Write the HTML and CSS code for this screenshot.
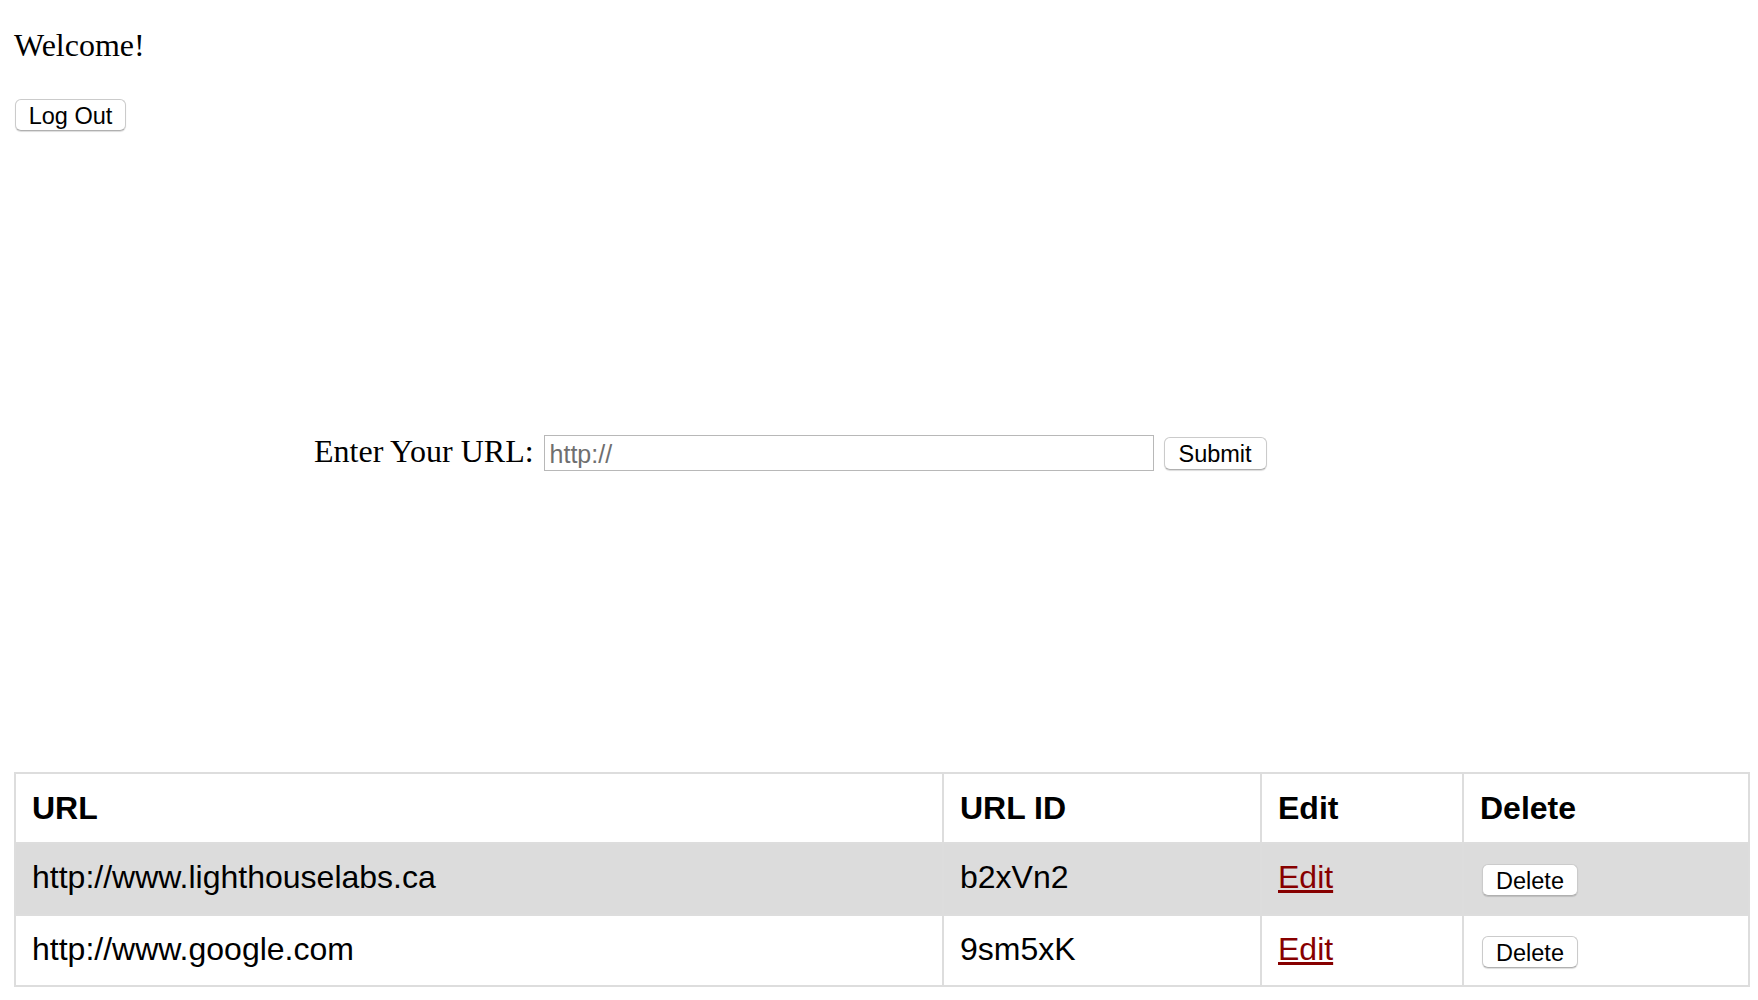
FILE: index.html
```html
<!DOCTYPE html>
<html lang="en">
<head>
<meta charset="utf-8">
<title>URL Shortener</title>
<link rel="stylesheet" href="styles.css">
</head>
<body>
<div class="page">
  <p class="welcome">Welcome!</p>
  <form class="logout-form">
    <button type="button" class="btn">Log Out</button>
  </form>
  <form class="url-form">
    <label class="url-label" for="longURL">Enter Your URL:</label>
    <input class="url-input" id="longURL" type="text" placeholder="http://">
    <button type="button" class="btn">Submit</button>
  </form>
  <table class="urls">
    <colgroup>
      <col class="c-url">
      <col class="c-id">
      <col class="c-edit">
      <col class="c-del">
    </colgroup>
    <thead>
      <tr class="head-row">
        <th>URL</th>
        <th>URL ID</th>
        <th>Edit</th>
        <th>Delete</th>
      </tr>
    </thead>
    <tbody>
      <tr class="row row-alt">
        <td>http://www.lighthouselabs.ca</td>
        <td>b2xVn2</td>
        <td><a href="#" class="edit-link">Edit</a></td>
        <td><button type="button" class="btn btn-del">Delete</button></td>
      </tr>
      <tr class="row row-last">
        <td>http://www.google.com</td>
        <td>9sm5xK</td>
        <td><a href="#" class="edit-link">Edit</a></td>
        <td><button type="button" class="btn btn-del">Delete</button></td>
      </tr>
    </tbody>
  </table>
</div>
</body>
</html>
```

FILE: styles.css
```css
html, body {
  margin: 0;
  padding: 0;
  background: #fff;
  color: #000;
}

.page {
  padding: 0 8px 0 14px;
  font-family: "Liberation Serif", "Times New Roman", serif;
  font-size: 32px;
}

.welcome {
  margin: 0;
  padding-top: 28px;
  line-height: 35px;
}

.logout-form {
  margin: 36px 0 0 0;
  display: flex;
}

.btn {
  font-family: "Liberation Sans", Arial, Helvetica, sans-serif;
  font-size: 23.5px;
  color: #000;
  background: #fff;
  height: 32px;
  padding: 2px 8px 0;
  border: 1px solid #cbcbcb;
  border-bottom-color: #b0b0b0;
  border-radius: 6px;
  box-shadow: 0 1px 1px rgba(0, 0, 0, 0.14);
  line-height: 28px;
  white-space: nowrap;
  cursor: pointer;
}

.logout-form .btn {
  margin-left: 1px;
  width: 111px;
}

.url-form {
  margin: 304px 0 0 300px;
  display: flex;
  align-items: center;
  height: 36px;
}

.url-label {
  line-height: 35px;
  margin-right: 10px;
  margin-bottom: 4px;
  white-space: nowrap;
}

.url-input {
  box-sizing: border-box;
  width: 610px;
  height: 36px;
  border: 1px solid #b8b8b8;
  padding: 2px 5px 0;
  font-family: "Liberation Sans", Arial, Helvetica, sans-serif;
  font-size: 25px;
  margin: 0 10px 0 0;
  outline: none;
}

.url-input::placeholder {
  color: #6f6f6f;
}

.url-form .btn {
  width: 103px;
  height: 33px;
}

.urls {
  margin-top: 301px;
  width: 1736px;
  table-layout: fixed;
  border-collapse: collapse;
  border: 2px solid #ddd;
  font-family: "Liberation Sans", Arial, Helvetica, sans-serif;
  font-size: 32px;
}

.c-url { width: 928px; }
.c-id { width: 318px; }
.c-edit { width: 202px; }
.c-del { width: 286px; }

.urls th,
.urls td {
  border: 2px solid #ddd;
  padding: 16px 16px;
  text-align: left;
  vertical-align: middle;
}

.urls th {
  font-weight: bold;
  line-height: 36px;
}

.row-alt td {
  background: #dcdcdc;
  line-height: 38px;
  padding-top: 14px;
  padding-bottom: 18px;
}

.row-last td {
  line-height: 37px;
  padding-top: 15px;
  padding-bottom: 17px;
}

.edit-link {
  color: #870000;
  text-decoration: underline;
}

.btn-del {
  width: 96px;
  margin-left: 2px;
  vertical-align: middle;
}
```
